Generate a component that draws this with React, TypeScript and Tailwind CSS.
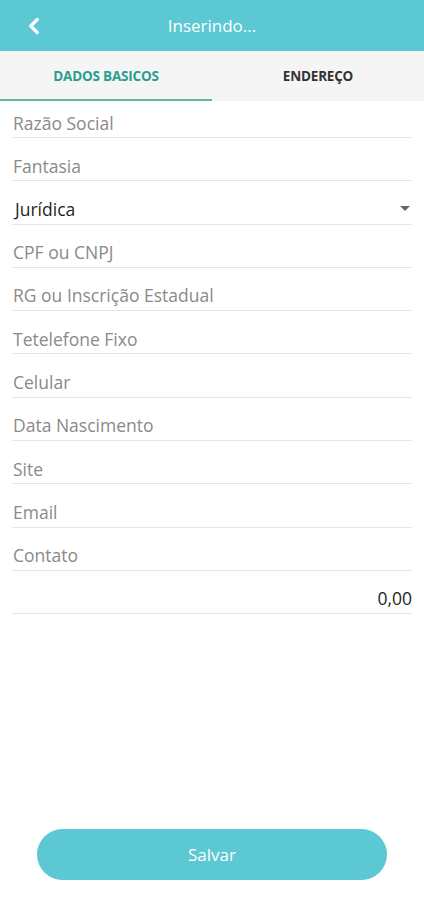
import { ChevronLeft } from "lucide-react"

const fields = [
    "Razão Social",
    "Fantasia",
    "Juridica",
    "CPF ou CNPJ",
    "RG ou Inscrição Estadual",
    "Tetelefone Fixo",
    "Celular",
    "Data Nascimento",
    "Site",
    "Email",
    "Contato",
]

const App = () => {
    return (
        <div className="flex flex-col w-[424px] h-[900px] bg-white font-['Open_Sans',sans-serif]">
            {/* header */}
            <div className="flex h-[51px] items-center bg-[#5bc8d4] px-[21px]">
                <div className="w-[40px]">
                    <ChevronLeft className="text-white" size={26} strokeWidth={3} />
                </div>
                <div className="flex-1 text-center text-white text-[17px]">Inserindo...</div>
                <div className="w-[40px]"></div>
            </div>

            {/* tabs */}
            <div className="flex h-[50px] bg-[#f5f5f5]">
                <div className="flex w-[212px] flex-col">
                    <div className="flex flex-1 items-center justify-center pt-[2px] text-[13.5px] font-bold tracking-[-0.2px] text-[#2a9d8f]">DADOS BASICOS</div>
                    <div className="h-[2px] bg-[#5fb7a3]"></div>
                </div>
                <div className="flex flex-1 items-center justify-center text-[13.5px] font-bold tracking-[-0.2px] text-[#333]">ENDEREÇO</div>
            </div>

            {/* form */}
            <div className="flex flex-col px-[12px]">
                {fields.map((f, i) => (
                    <div
                        key={f}
                        className={`flex items-center justify-between border-b border-[#e6e6e6] ${i === 0 ? "h-[37px] pt-[8px]" : "h-[43.3px] pt-[13px]"}`}
                    >
                        {f === "Juridica" ? (
                            <>
                                <span className="pl-[3px] text-[17.5px] text-[#1f1f1f]">Jurídica</span>
                                <svg width="10" height="6" viewBox="0 0 10 6" className="mr-[2px]">
                                    <path d="M0 0 L10 0 L5 5 Z" fill="#666" />
                                </svg>
                            </>
                        ) : (
                            <span className="pl-[1px] text-[17.5px] text-[#8a8a8a]">{f}</span>
                        )}
                    </div>
                ))}
                <div className="flex h-[43.3px] items-center justify-end border-b border-[#e6e6e6] pt-[13px]">
                    <span className="text-[17.5px] text-[#1f1f1f]">0,00</span>
                </div>
            </div>

            <div className="flex-1"></div>

            <div className="flex justify-center pb-[20px]">
                <button className="flex h-[51px] w-[350px] items-center justify-center rounded-full bg-[#5bc8d4] text-[17px] text-white">
                    Salvar
                </button>
            </div>
        </div>
    )
}

export default App
